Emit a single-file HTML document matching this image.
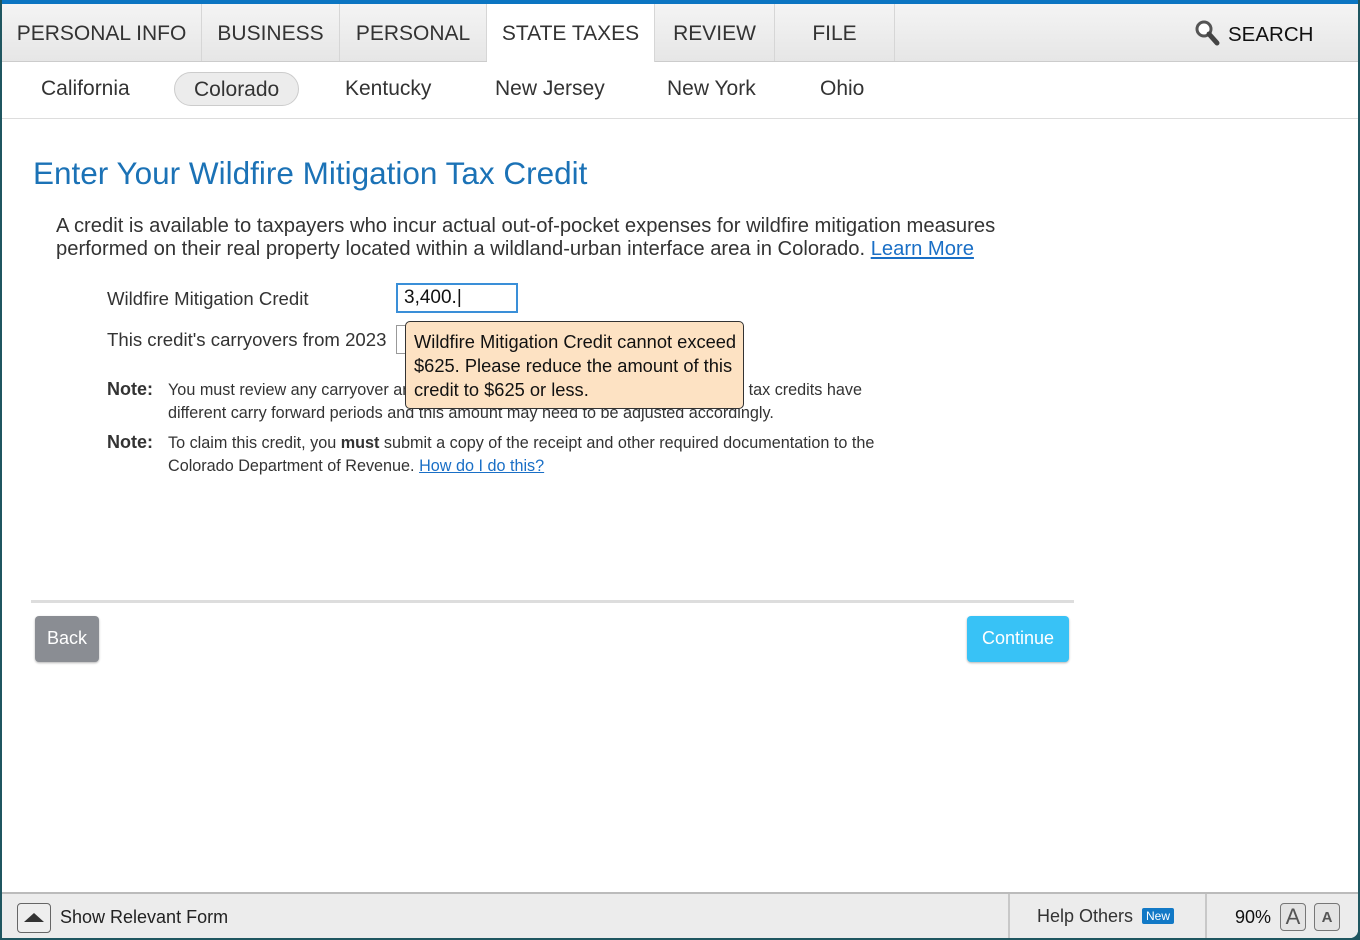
<!DOCTYPE html>
<html><head><meta charset="utf-8"><style>
*{box-sizing:border-box;margin:0;padding:0}
body{width:1360px;height:940px;background:#1f5660;font-family:"Liberation Sans",sans-serif;position:relative;overflow:hidden}
#win{position:absolute;left:2px;top:0;width:1356px;height:938px;background:#fff;border-bottom-right-radius:8px;overflow:hidden}
#top{position:absolute;left:0;top:0;width:100%;height:4px;background:#0b75c2}
#tabs{position:absolute;left:0;top:4px;width:100%;height:58px;background:linear-gradient(#f4f4f4,#e6e6e6);border-bottom:1px solid #ccc}
.tab{position:absolute;top:0;height:57px;line-height:59px;text-align:center;font-size:21px;color:#333;border-right:1px solid #d6d6d6}
.tab.on{background:#fff;height:58px}
#sub{position:absolute;left:0;top:62px;width:100%;height:57px;border-bottom:1px solid #ddd}
.st{position:absolute;top:10px;height:34px;line-height:34px;font-size:21px;color:#333}
.st.on{background:#ececec;border:1px solid #ccc;border-radius:17px;padding:0 19px}
h1{position:absolute;left:31px;top:155px;font-size:31.5px;font-weight:normal;color:#1b72b6;white-space:nowrap}
.p{position:absolute;left:54px;top:215px;font-size:20.2px;line-height:23px;color:#333;width:1000px}
a{color:#1a6fc6}
.lbl{position:absolute;font-size:18.6px;color:#333;white-space:nowrap}
.inp{position:absolute;border:1px solid #999;background:#fff;font-size:19px;padding-left:6px;line-height:26px;color:#111}
.tip{position:absolute;left:403px;top:321px;width:339px;height:88px;background:#fde2c3;border:1px solid #333;border-radius:5px;padding:8px 8px;font-size:18.3px;line-height:24px;color:#111;white-space:nowrap}
.nt{position:absolute;left:105px;font-size:18px;font-weight:bold;color:#333}
.ntx{position:absolute;left:166px;font-size:16.2px;line-height:23px;color:#333;white-space:nowrap}
#sep{position:absolute;left:29px;top:600px;width:1043px;height:3px;background:#ddd}
.btn{position:absolute;top:616px;height:46px;line-height:44px;font-size:18px;color:#fff;border-radius:4px;text-align:center;box-shadow:0 1px 2px rgba(0,0,0,.3)}
#foot{position:absolute;left:0;top:892px;width:100%;height:46px;background:#ececec;border-top:2px solid #bbb}
</style></head><body>
<div id="win">
<div id="top"></div>
<div id="tabs">
<div class="tab" style="left:0;width:200px">PERSONAL INFO</div>
<div class="tab" style="left:200px;width:138px">BUSINESS</div>
<div class="tab" style="left:338px;width:147px">PERSONAL</div>
<div class="tab on" style="left:485px;width:168px">STATE TAXES</div>
<div class="tab" style="left:653px;width:120px">REVIEW</div>
<div class="tab" style="left:773px;width:120px">FILE</div>
<div style="position:absolute;left:1193px;top:16px">
<svg width="26" height="28" viewBox="0 0 26 28"><circle cx="9" cy="9" r="7" fill="#fff" stroke="#555" stroke-width="3"/><path d="M14 14 L22 23" stroke="#444" stroke-width="5" stroke-linecap="round"/></svg></div>
<div style="position:absolute;left:1226px;top:1px;line-height:60px;font-size:20.5px;color:#111">SEARCH</div>
</div>
<div id="sub">
<div class="st" style="left:39px">California</div>
<div class="st on" style="left:172px">Colorado</div>
<div class="st" style="left:343px">Kentucky</div>
<div class="st" style="left:493px">New Jersey</div>
<div class="st" style="left:665px">New York</div>
<div class="st" style="left:818px">Ohio</div>
</div>
<h1>Enter Your Wildfire Mitigation Tax Credit</h1>
<div class="p">A credit is available to taxpayers who incur actual out-of-pocket expenses for wildfire mitigation measures performed on their real property located within a wildland-urban interface area in Colorado. <a href="#">Learn More</a></div>
<div class="lbl" style="left:105px;top:288px">Wildfire Mitigation Credit</div>
<div class="inp" style="left:394px;top:283px;width:122px;height:30px;border:2px solid #3a8fd8">3,400.|</div>
<div class="lbl" style="left:105px;top:329px">This credit's carryovers from 2023</div>
<div class="inp" style="left:394px;top:325px;width:122px;height:29px"></div>
<div class="nt" style="top:379px">Note:</div>
<div class="ntx" style="top:379px">You must review any carryover amounts from the prior year, since some of these tax credits have<br>different carry forward periods and this amount may need to be adjusted accordingly.</div>
<div class="nt" style="top:432px">Note:</div>
<div class="ntx" style="top:432px">To claim this credit, you <b>must</b> submit a copy of the receipt and other required documentation to the<br>Colorado Department of Revenue. <a href="#">How do I do this?</a></div>
<div class="tip">Wildfire Mitigation Credit cannot exceed<br>$625. Please reduce the amount of this<br>credit to $625 or less.</div>
<div id="sep"></div>
<div class="btn" style="left:33px;width:64px;background:#8a8d93">Back</div>
<div class="btn" style="left:965px;width:102px;background:#38c2f6">Continue</div>
<div id="foot">
<div style="position:absolute;left:15px;top:9px;width:34px;height:30px;border:1px solid #666;border-radius:4px;background:#eee"><div style="margin:9px auto 0;width:0;height:0;border-left:10px solid transparent;border-right:10px solid transparent;border-bottom:9px solid #333"></div></div>
<div style="position:absolute;left:58px;top:13px;font-size:18px;color:#222">Show Relevant Form</div>
<div style="position:absolute;left:1006px;top:0;width:2px;height:46px;background:#c8c8c8"></div>
<div style="position:absolute;left:1035px;top:12px;font-size:18px;color:#333">Help Others</div>
<div style="position:absolute;left:1140px;top:14px;background:#1279c6;color:#fff;font-size:12px;padding:1px 4px;border-radius:2px">New</div>
<div style="position:absolute;left:1203px;top:0;width:2px;height:46px;background:#c8c8c8"></div>
<div style="position:absolute;left:1233px;top:13px;font-size:18px;color:#111">90%</div>
<div style="position:absolute;left:1278px;top:9px;width:26px;height:28px;border:1px solid #777;border-radius:4px;background:#e4e4e4;text-align:center;font-size:22px;line-height:26px;color:#555">A</div>
<div style="position:absolute;left:1312px;top:9px;width:26px;height:28px;border:1px solid #777;border-radius:4px;background:#e4e4e4;text-align:center;font-size:15px;font-weight:bold;line-height:28px;color:#555">A</div>
</div>
</div>
</body></html>
